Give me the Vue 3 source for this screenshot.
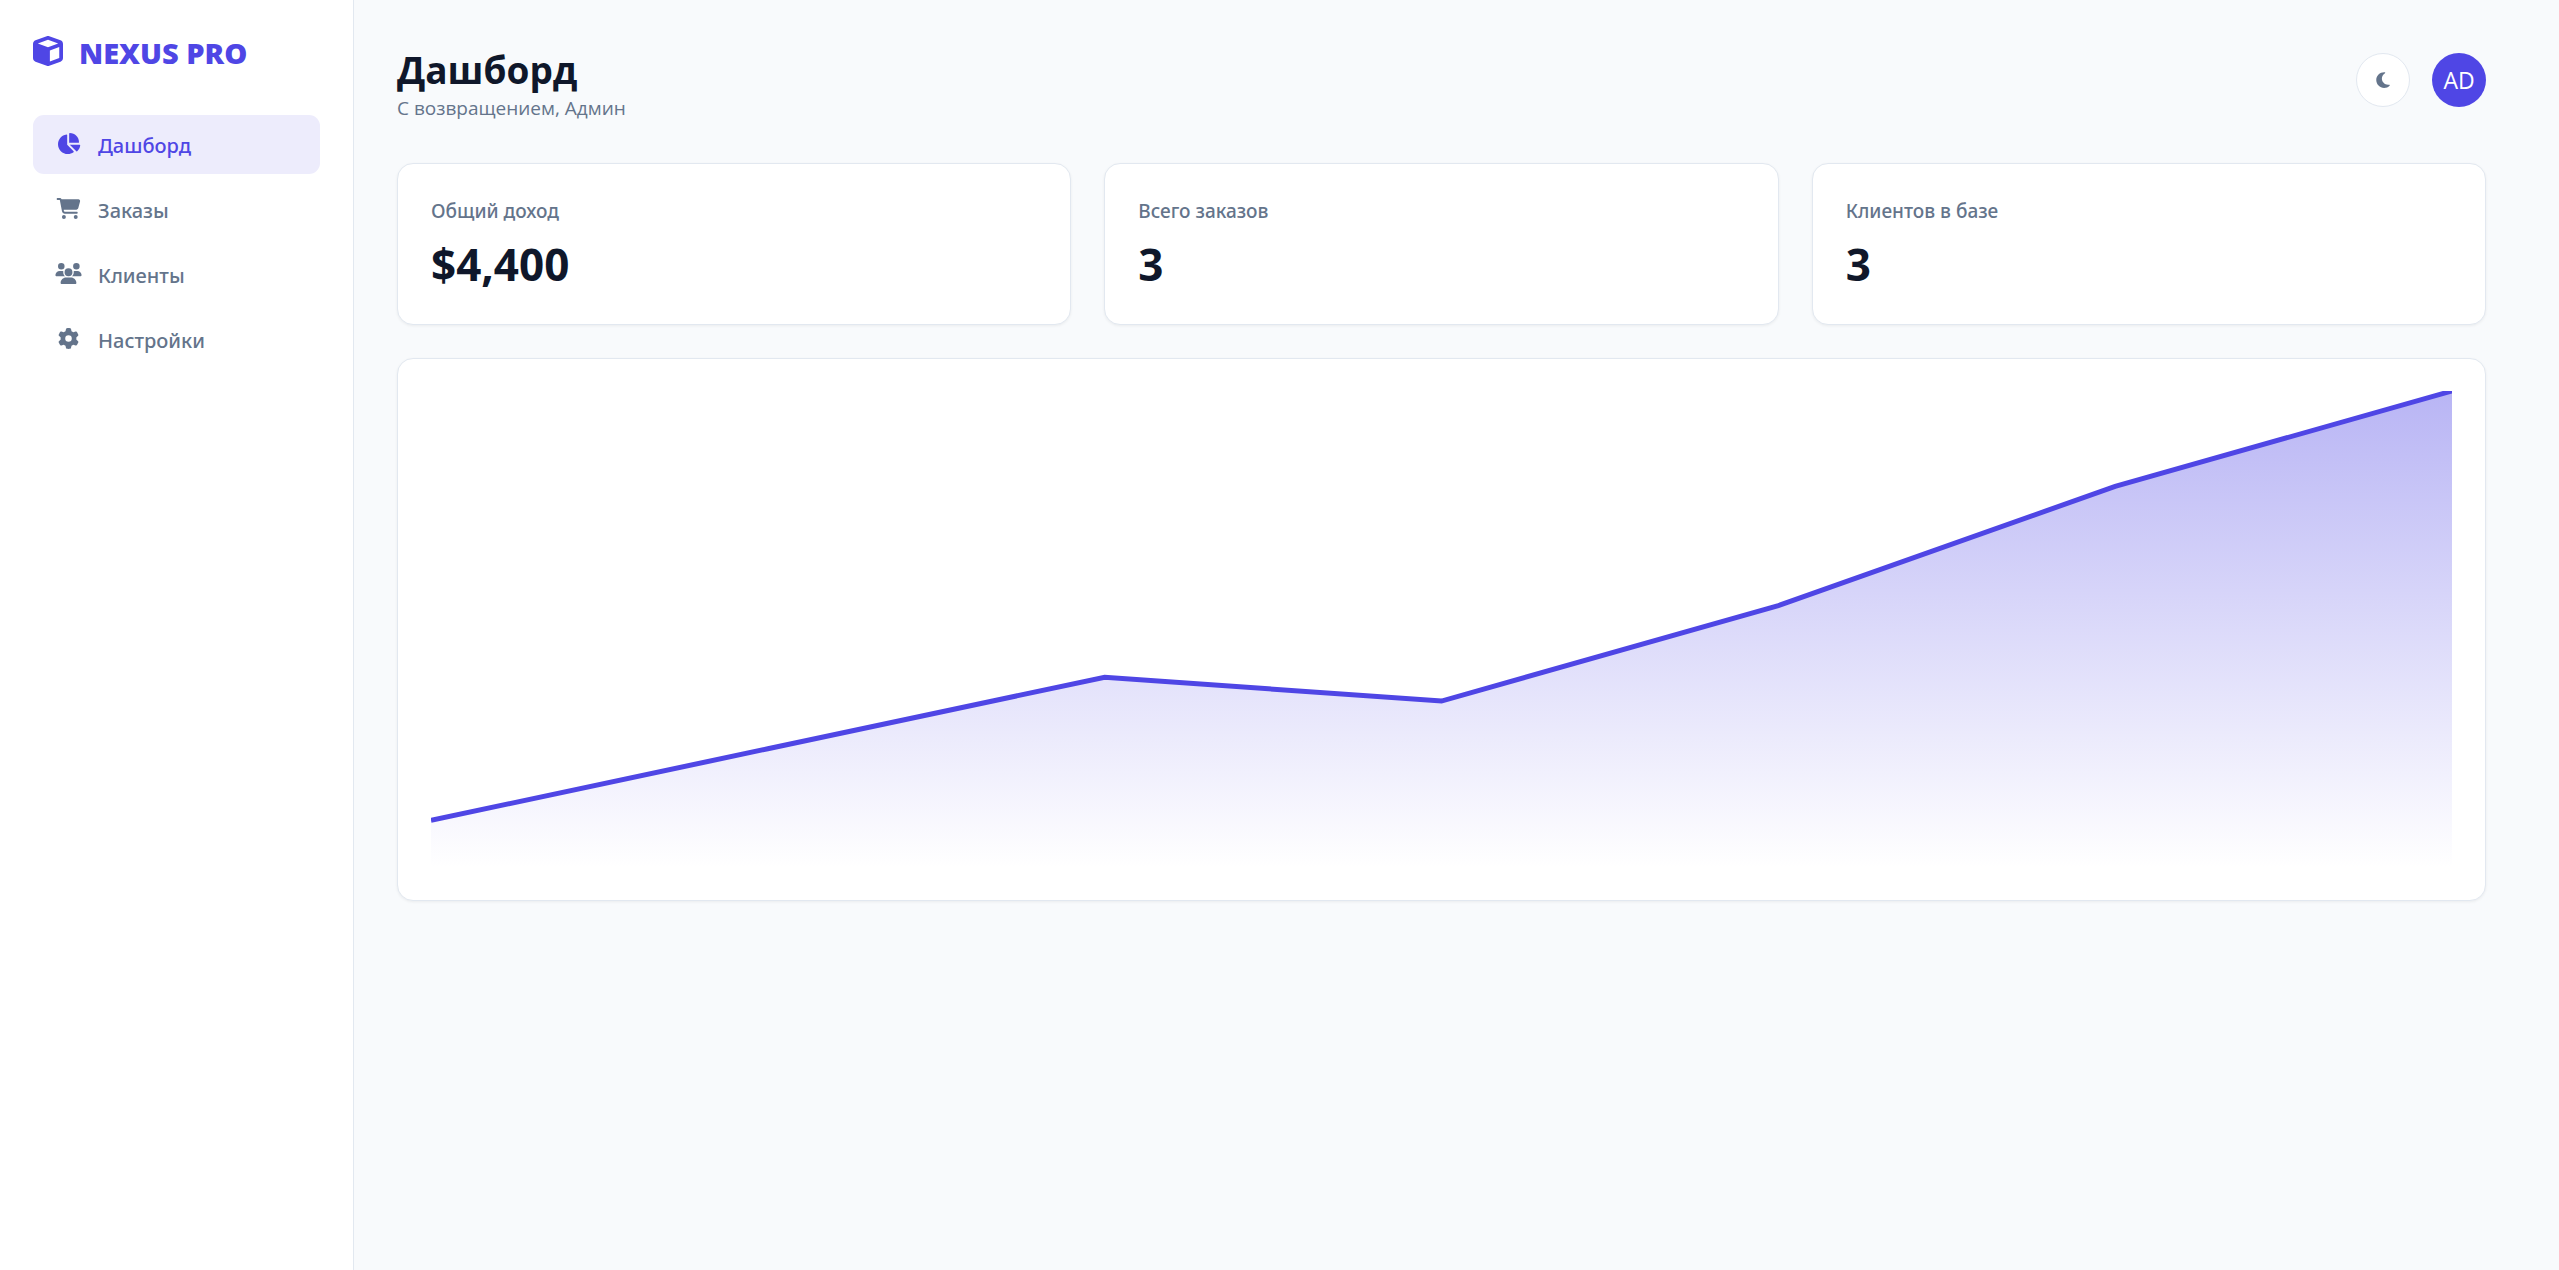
<!--
  App.vue - главная страница панели управления

  - слева меню с логотипом
  - справа шапка, три карточки со статистикой и график дохода
-->
<template>
  <div class="layout">
    <!-- Боковое меню -->
    <aside class="sidebar">
      <div class="logo">
        <svg class="logo-icon" viewBox="0 0 512 512" aria-hidden="true"><path :d="icons.cube" /></svg>
        <span>NEXUS PRO</span>
      </div>
      <nav class="nav">
        <a
          v-for="item in menu"
          :key="item.id"
          href="#"
          class="nav-item"
          :class="{ active: page === item.id }"
          @click.prevent="page = item.id"
        >
          <svg class="nav-icon" :viewBox="item.box" aria-hidden="true"><path :d="icons[item.icon]" /></svg>
          <span>{{ item.label }}</span>
        </a>
      </nav>
    </aside>

    <main class="main">
      <!-- Шапка -->
      <header class="header">
        <div>
          <h1 class="title">Дашборд</h1>
          <p class="subtitle">С возвращением, Админ</p>
        </div>
        <div class="header-actions">
          <button type="button" class="theme-btn" aria-label="Сменить тему">
            <svg class="moon" viewBox="0 0 384 512" aria-hidden="true"><path :d="icons.moon" /></svg>
          </button>
          <div class="avatar">AD</div>
        </div>
      </header>

      <!-- Статистика -->
      <section class="stats">
        <div v-for="s in stats" :key="s.label" class="card">
          <p class="stat-label">{{ s.label }}</p>
          <p class="stat-value">{{ s.value }}</p>
        </div>
      </section>

      <!-- График -->
      <section class="card">
        <svg class="chart" viewBox="0 0 6 20" preserveAspectRatio="none" role="img" aria-label="График дохода">
          <defs>
            <linearGradient id="area" x1="0" y1="0" x2="0" y2="1">
              <stop offset="0" stop-color="#4f46e5" stop-opacity="0.4" />
              <stop offset="1" stop-color="#4f46e5" stop-opacity="0" />
            </linearGradient>
          </defs>
          <polygon :points="`0,20 ${line} 6,20`" fill="url(#area)" />
          <polyline class="chart-line" :points="line" />
        </svg>
      </section>
    </main>
  </div>
</template>

<script setup>
import { ref, computed } from 'vue';

const page = ref('dashboard'); // активный пункт меню

const menu = [
  { id: 'dashboard', label: 'Дашборд', icon: 'pie', box: '0 0 576 512' },
  { id: 'orders', label: 'Заказы', icon: 'cart', box: '0 0 576 512' },
  { id: 'clients', label: 'Клиенты', icon: 'users', box: '0 0 640 512' },
  { id: 'settings', label: 'Настройки', icon: 'gear', box: '0 0 512 512' },
];

const stats = [
  { label: 'Общий доход', value: '$4,400' },
  { label: 'Всего заказов', value: '3' },
  { label: 'Клиентов в базе', value: '3' },
];

// Значения графика по месяцам, шкала от 0 до 20
const income = [2, 5, 8, 7, 11, 16, 20];
const line = computed(() => income.map((v, i) => `${i},${20 - v}`).join(' '));

const icons = {
  cube: 'M234.5 5.7c13.9-5 29.1-5 43.1 0l192 68.6C495 83.4 512 107.5 512 134.6V377.4c0 27-17 51.2-42.5 60.3l-192 68.6c-13.9 5-29.1 5-43.1 0l-192-68.6C17 428.6 0 404.5 0 377.4V134.6c0-27 17-51.2 42.5-60.3l192-68.6zM256 66L82.3 128 256 190l173.7-62L256 66zm32 368.6l160-57.1v-188L288 246.6v188z',
  pie: 'M304 240V16.6c0-9 7-16.6 16-16.6C443.7 0 544 100.3 544 224c0 9-7.6 16-16.6 16H304zM32 272C32 150.7 122.1 50.3 239 34.3c9.2-1.3 17 6.1 17 15.4V288L412.5 444.5c6.7 6.7 6.2 17.7-1.5 23.1C371.8 495.6 323.8 512 272 512C139.5 512 32 404.6 32 272zm526.4 16c9.3 0 16.6 7.8 15.4 17c-7.7 55.9-34.6 105.6-73.9 142.3c-6 5.6-15.4 5.2-21.2-.7L320 288H558.4z',
  cart: 'M0 24C0 10.7 10.7 0 24 0H69.5c22 0 41.5 12.8 50.6 32h411c26.3 0 45.5 25 38.6 50.4l-41 152.3c-8.5 31.4-37 53.3-69.5 53.3H170.7l5.4 28.5c2.2 11.3 12.1 19.5 23.6 19.5H488c13.3 0 24 10.7 24 24s-10.7 24-24 24H199.7c-34.6 0-64.3-24.6-70.7-58.5L77.4 54.5c-.7-3.8-4-6.5-7.9-6.5H24C10.7 48 0 37.3 0 24zM128 464a48 48 0 1 1 96 0 48 48 0 1 1 -96 0zm336-48a48 48 0 1 1 0 96 48 48 0 1 1 0-96z',
  users: 'M144 0a80 80 0 1 1 0 160A80 80 0 1 1 144 0zM512 0a80 80 0 1 1 0 160A80 80 0 1 1 512 0zM0 298.7C0 239.8 47.8 192 106.7 192h42.7c15.9 0 31 3.5 44.6 9.7c-1.3 7.2-1.9 14.7-1.9 22.3c0 38.2 16.8 72.5 43.3 96c-.2 0-.4 0-.7 0H21.3C9.6 320 0 310.4 0 298.7zM405.3 320c-.2 0-.4 0-.7 0c26.6-23.5 43.3-57.8 43.3-96c0-7.6-.7-15-1.9-22.3c13.6-6.3 28.7-9.7 44.6-9.7h42.7C592.2 192 640 239.8 640 298.7c0 11.8-9.6 21.3-21.3 21.3H405.3zM224 224a96 96 0 1 1 192 0 96 96 0 1 1 -192 0zM128 485.3C128 411.7 187.7 352 261.3 352H378.7C452.3 352 512 411.7 512 485.3c0 14.7-11.9 26.7-26.7 26.7H154.7c-14.7 0-26.7-11.9-26.7-26.7z',
  gear: 'M495.9 166.6c3.2 8.7 .5 18.4-6.4 24.6l-43.3 39.4c1.1 8.3 1.7 16.8 1.7 25.4s-.6 17.1-1.7 25.4l43.3 39.4c6.9 6.2 9.6 15.9 6.4 24.6c-4.4 11.9-9.7 23.3-15.8 34.3l-4.7 8.1c-6.6 11-14 21.4-22.1 31.2c-5.9 7.2-15.7 9.6-24.5 6.8l-55.7-17.7c-13.4 10.3-28.2 18.9-44 25.4l-12.5 57.1c-2 9.1-9 16.3-18.2 17.8c-13.8 2.3-28 3.5-42.5 3.5s-28.7-1.2-42.5-3.5c-9.2-1.5-16.2-8.7-18.2-17.8l-12.5-57.1c-15.8-6.5-30.6-15.1-44-25.4L83.1 425.9c-8.8 2.8-18.6 .3-24.5-6.8c-8.1-9.8-15.5-20.2-22.1-31.2l-4.7-8.1c-6.1-11-11.4-22.4-15.8-34.3c-3.2-8.7-.5-18.4 6.4-24.6l43.3-39.4C64.6 273.1 64 264.6 64 256s.6-17.1 1.7-25.4L22.4 191.2c-6.9-6.2-9.6-15.9-6.4-24.6c4.4-11.9 9.7-23.3 15.8-34.3l4.7-8.1c6.6-11 14-21.4 22.1-31.2c5.9-7.2 15.7-9.6 24.5-6.8l55.7 17.7c13.4-10.3 28.2-18.9 44-25.4l12.5-57.1c2-9.1 9-16.3 18.2-17.8C227.3 1.2 241.5 0 256 0s28.7 1.2 42.5 3.5c9.2 1.5 16.2 8.7 18.2 17.8l12.5 57.1c15.8 6.5 30.6 15.1 44 25.4l55.7-17.7c8.8-2.8 18.6-.3 24.5 6.8c8.1 9.8 15.5 20.2 22.1 31.2l4.7 8.1c6.1 11 11.4 22.4 15.8 34.3zM256 336a80 80 0 1 0 0-160 80 80 0 1 0 0 160z',
  moon: 'M223.5 32C100 32 0 132.3 0 256S100 480 223.5 480c60.6 0 115.5-24.2 155.8-63.4c5-4.9 6.3-12.5 3.1-18.7s-10.1-9.7-17-8.5c-9.8 1.7-19.8 2.6-30.1 2.6c-96.9 0-175.5-78.8-175.5-176c0-65.8 36-123.1 89.3-153.3c6.1-3.5 9.2-10.5 7.7-17.3s-7.3-11.9-14.3-12.5c-6.3-.5-12.6-.8-19-.8z',
};
</script>

<style>
body { margin: 0; background: #f8fafc; }
</style>

<style scoped>
.layout {
  display: flex;
  min-height: 100vh;
  font-family: "Open Sans", "Noto Sans", sans-serif;
  color: #0f172a;
}
.layout * { box-sizing: border-box; }
p, h1 { margin: 0; }
svg { fill: currentColor; }

/* Меню */
.sidebar {
  width: 354px;
  flex-shrink: 0;
  padding: 32px 33px;
  background: #fff;
  border-right: 1px solid #e2e8f0;
}
.logo {
  display: flex;
  align-items: center;
  gap: 16px;
  height: 40px;
  margin-bottom: 43px;
  font-size: 29px;
  font-weight: 800;
  color: #4f46e5;
}
.logo-icon { width: 30px; height: 30px; margin-bottom: 2px; }
.nav { display: flex; flex-direction: column; gap: 6px; }
.nav-item {
  display: flex;
  align-items: center;
  gap: 16px;
  height: 59px;
  padding: 2px 22px 0;
  border-radius: 11px;
  font-family: "Noto Sans", sans-serif;
  font-size: 20px;
  font-weight: 500;
  color: #64748b;
  text-decoration: none;
}
.nav-item.active { background: #edecfc; color: #4f46e5; }
.nav-icon { width: 27px; height: 21px; margin-bottom: 4px; }

/* Шапка */
.main { flex: 1; min-width: 0; padding: 43px 73px 44px 43px; }
.header {
  display: flex;
  align-items: center;
  justify-content: space-between;
  height: 74px;
  margin-bottom: 46px;
}
.title { padding-top: 6px; font-size: 37px; font-weight: 700; line-height: 50px; }
.subtitle { font-size: 19px; line-height: 26px; color: #64748b; }
.header-actions { display: flex; gap: 22px; }
.theme-btn, .avatar {
  display: flex;
  align-items: center;
  justify-content: center;
  width: 54px;
  height: 54px;
  padding: 0;
  border-radius: 50%;
}
.theme-btn { background: #fff; border: 1px solid #e2e8f0; color: #64748b; cursor: pointer; }
.moon { width: 14px; height: 18px; }
.avatar { background: #4f46e5; color: #fff; font-size: 23px; }

/* Карточки */
.stats {
  display: grid;
  grid-template-columns: repeat(3, 1fr);
  gap: 33px;
  margin-bottom: 33px;
}
.card {
  padding: 32px 33px;
  background: #fff;
  border: 1px solid #e2e8f0;
  border-radius: 16px;
  box-shadow: 0 1px 3px rgba(0, 0, 0, 0.06);
}
.stat-label {
  font-family: "Noto Sans", sans-serif;
  font-size: 19px;
  font-weight: 500;
  line-height: 30px;
  color: #64748b;
}
.stat-value { margin-top: 10px; font-size: 44px; font-weight: 700; line-height: 56px; }
.chart { display: block; width: 100%; height: 477px; overflow: hidden; }
.chart-line {
  fill: none;
  stroke: #4f46e5;
  stroke-width: 5px;
  vector-effect: non-scaling-stroke;
}
</style>
